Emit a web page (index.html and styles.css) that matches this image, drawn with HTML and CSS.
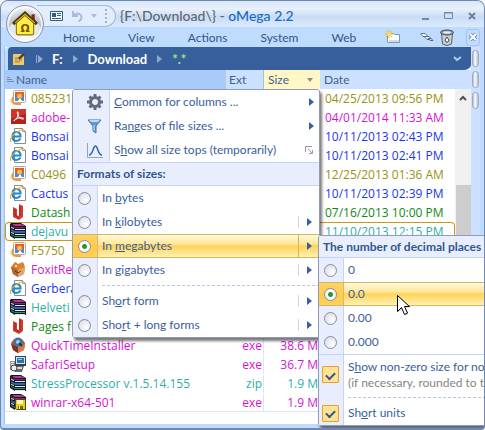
FILE: index.html
```html
<!DOCTYPE html>
<html lang="en">
<head>
<meta charset="utf-8">
<title>{F:\Download\} - oMega 2.2</title>
<link rel="stylesheet" href="styles.css">
</head>
<body>
<svg class="sprite" aria-hidden="true">
  <symbol id="photo" viewBox="0 0 16 16">
    <path d="M3 6C0 9 1 14 5 15h6v-2H6C3 12 3 9 5 7z" fill="#f59a35"/><path d="M1 9c-1 4 2 6 5 6" fill="none" stroke="#ffcf8a"/>
    <rect x="3.500" y=".5" width="12" height="12" rx="1" fill="#fff" stroke="#b5a9a5"/>
    <rect x="5" y="2" width="9" height="9" fill="#e9581c"/><path d="M5 11V6l3 1 1 4zM10 11l1-3 3-2v5z" fill="#3f8fe0"/><circle cx="9.500" cy="6" r="2.500" fill="#ffb84a"/><path d="M8 11l2-3 2 3z" fill="#fff"/>
  </symbol>
  <symbol id="adobe" viewBox="0 0 16 16">
    <rect x="1" y="0" width="15" height="15" fill="#b81f18"/><path d="M1 0h15v5L1 10z" fill="#d0342b"/>
    <path d="M4 12c3-2 5-6 4-9-1-1-1 1 0 3 1 3 3 4 5 4s0-2-4-1-5 2-5 3z" fill="none" stroke="#fff"/>
  </symbol>
  <symbol id="ie" viewBox="0 0 16 16">
    <path d="M4.500.5h8l3 3v12h-11z" fill="#fff" stroke="#8b8b96"/><path d="M12.500.5v3h3" fill="#ddd" stroke="#8b8b96"/>
    <path d="M2.500 8.500h8c0-3-1.500-4.500-4-4.500s-4 2-4 4.500S4 13 6.500 13s3-1 4-2.500" fill="none" stroke="#2089cf" stroke-width="2.200"/>
    <path d="M1 14c-2-3 2-9 10-12 2-.5 2 .5 1.500 2" fill="none" stroke="#e8b52e" stroke-width="1.200"/>
  </symbol>
  <symbol id="rar" viewBox="0 0 16 16">
    <path d="M0 1l1-1h10l5 3v13H5L0 13z" fill="#171717"/>
    <path d="M2 1h9l4 2H5z" fill="#b23aa0"/><path d="M1 2l4 2h10v1H5L1 3z" fill="#8a2478"/>
    <path d="M1 6l4 2h10v2H5L1 8z" fill="#3060c8"/><path d="M1 11l4 2h10v1H5l-4-2z" fill="#15a07a"/>
    <path d="M5 6h10v1H5zM5 11h10v1H5zM5 15h10v1H5z" fill="#e8e8e8"/><path d="M1 4l3 1v1L1 5zM1 9l3 1v1l-3-1z" fill="#eee"/>
  </symbol>
  <symbol id="redbook" viewBox="0 0 16 16">
    <path d="M3 3l4 2v6l2 1V0l4 2v11l-4 3-6-3z" fill="#d63a2e"/><path d="M5 5v6l4 3M10 2v10" fill="none" stroke="#a8221c"/><path d="M7 5v6l2 1V5z" fill="#fff"/>
  </symbol>
  <symbol id="fox" viewBox="0 0 16 16">
    <path d="M1 6l4-5 3 2 5-2 2 5-1 7-6 3-5-3z" fill="#c98445"/><path d="M1 6l7 3v7l-5-3z" fill="#a96731"/><path d="M8 9l7-3-1 7-6 3z" fill="#e0ac6e"/>
    <path d="M3 4l3-3 2 3 4-2 1 4-5 3z" fill="#ef7d24"/><circle cx="6" cy="5" r="1" fill="#fff"/><path d="M5 10l3 2 3-2" stroke="#643417" fill="none"/>
  </symbol>
  <symbol id="qt" viewBox="0 0 16 16">
    <path d="M1 6l3-4h8l3 4-1 7-6 3-5-3z" fill="#b75738"/><path d="M1 7l7 3v6l-5-3z" fill="#7e3425"/><path d="M8 10l7-3-1 6-6 3z" fill="#d37a50"/>
    <circle cx="8" cy="5" r="4.500" fill="#3c759f"/><circle cx="8" cy="5" r="2" fill="#9fd0e8"/><path d="M9 6l3 3" stroke="#173652" stroke-width="2"/>
  </symbol>
  <symbol id="setup" viewBox="0 0 16 16">
    <path d="M5 0h11v10H5z" fill="#3a3f45"/><path d="M6 1h9v7H6z" fill="#d9e5ec"/><path d="M7 2h7v5H7z" fill="#2476b8"/><path d="M8 3h4v1H8z" fill="#8bd3f4"/>
    <path d="M0 5h5v9H0z" fill="#999"/><path d="M1 6h3v1H1zM1 8h3v1H1z" fill="#eee"/><path d="M3 10h11l-2 6H5z" fill="#666b70"/><path d="M5 11h7v2H5z" fill="#ddd"/><circle cx="4" cy="12" r="3" fill="#eee" stroke="#444"/>
  </symbol>
  <symbol id="disk" viewBox="0 0 16 16">
    <use href="#rar"/><path d="M5.500 5.500h10v10h-9l-1-1z" fill="#e5cf1b" stroke="#554b08"/><path d="M7 6h6v4H7z" fill="#fff8b8"/><path d="M8 12h5v3H8z" fill="#756a17"/><path d="M9 12h1v3H9z" fill="#fff"/>
  </symbol>
  <symbol id="tri" viewBox="0 0 5 8"><path d="M0 0l5 4-5 4z" fill="currentColor"/></symbol>
</svg>

<div class="window">
  <header class="titlebar">
    <div class="quick">
      <button aria-label="Views"><svg width="14" height="10"><path d="M.5.5h12v9H.5z" fill="#f5faff" stroke="#35588e"/><path d="M2 2h4v4H2zM7 2h4v1H7zM7 4h4v1H7zM2 7h9v1H2z" fill="#35588e"/></svg></button>
      <button aria-label="Undo"><svg width="11" height="12"><path d="M1 1v5h5M1.500 5.500c4-4 8-1 8 2s-2 3-3 4" fill="none" stroke="#a9bcd9" stroke-width="2"/></svg></button>
      <button aria-label="More"><svg width="6" height="4"><path d="M0 0h6L3 4z" fill="#a9bcd9"/></svg></button>
      <span class="grip"></span>
    </div>
    <h1>{F:\Download\} - <span>oMega 2.2</span></h1>
    <div class="controls">
      <button aria-label="Minimize"><svg width="10" height="10"><path d="M2 7h7v2H2z" fill="#7288aa"/></svg></button>
      <button aria-label="Maximize"><svg width="10" height="8"><path d="M.5.5h8v6h-8zM0 1h9" fill="none" stroke="#7288aa"/></svg></button>
      <button aria-label="Close"><svg width="8" height="8"><path d="M1 1l6 6M7 1L1 7" stroke="#6b80a3" stroke-width="2"/></svg></button>
    </div>
  </header>
  <nav class="mainmenu">
    <div class="tabs"><a href="#">Home</a><a href="#">View</a><a href="#">Actions</a><a href="#">System</a><a href="#">Web</a></div>
    <div class="tools">
      <button aria-label="New folder"><svg width="18" height="14"><path d="M3.500 4.500l2-1h4l1 1h5v8h-12z" fill="#fff" stroke="#8292b0"/><path d="M5 10h10v2H5z" fill="#cfdcf2"/><path d="M5 0v8M1 4h8M2 1l6 6M8 1L2 7" stroke="#edb12b"/><circle cx="5" cy="4" r="2" fill="#ffe15a"/></svg></button>
      <button aria-label="Links"><svg width="14" height="9"><path d="M1 .5h4l2 2-1 1H3l-2-2zM5 3.500h4l2 2-1 1H7l-2-2zM8 5.500h3l2 2h-3z" fill="#fff" stroke="#566a8a"/></svg></button>
      <button aria-label="Recycle bin"><svg width="14" height="17"><path d="M1.500 4h11l-1 11q-4.500 3-9 0z" fill="#c9cfd5" stroke="#555f69"/><ellipse cx="7" cy="3.500" rx="6.500" ry="2.500" fill="#8b96a0" stroke="#444e58"/><ellipse cx="7" cy="3.500" rx="4" ry="1.200" fill="#e6ebef"/><path d="M5 11l2-3 2 3-1 2H6z" fill="#fff" stroke="#3c464f"/></svg></button>
      <button class="tabclose" aria-label="Close tab"><svg width="8" height="8"><path d="M1 1l6 6M7 1L1 7" stroke="#7590b8" stroke-width="4"/><path d="M1 1l6 6M7 1L1 7" stroke="#fff" stroke-width="2"/></svg></button>
    </div>
  </nav>
  <button class="orb" aria-label="Home"><svg viewBox="0 0 24 24"><path d="M18 3h3v8h-3z" fill="#7f2d1d"/><path d="M4 11v9q0 2 2 2h12q2 0 2-2v-9l-8-7z" fill="#ffed4a" stroke="#886d00"/><path d="M1 12L12 2l11 10" fill="none" stroke="#4d3900" stroke-width="3"/><path d="M3 11l9-8 9 8" fill="none" stroke="#e8bd22"/><text x="12" y="19" text-anchor="middle">Ω</text></svg></button>

  <div class="workspace">
    <main class="main">
      <div class="path">
        <svg class="edit" width="12" height="12"><rect width="11" height="12" y="1" rx="1" fill="#f1ca68"/><path d="M2 5h7M2 7h7M2 9h5" stroke="#a07b2d"/><path d="M4 8l1-3 5-5 2 2-6 5z" fill="#4b4236"/><path d="M4 8l1-3 1 2z" fill="#fff"/></svg>
        <svg class="start" width="8" height="8"><path d="M0 0h1v8H0zM2 0l5 4-5 4z" fill="#91a9d0"/></svg>
        <a href="#">F:</a><svg class="arrow"><use href="#tri"/></svg><a href="#">Download</a><svg class="arrow"><use href="#tri"/></svg><a class="mask" href="#">*.*</a>
        <svg class="chevron" width="9" height="6"><path d="M1 1l3 3 4-3" fill="none" stroke="#b8cbed" stroke-width="2"/></svg>
      </div>
      <div class="files">
        <table>
          <colgroup><col><col class="c-ext"><col class="c-size"><col class="c-date"></colgroup>
          <thead><tr><th class="h-name"><div><svg width="9" height="8"><path d="M1 1.500h3M1 3.500h5M1 5.500h7" stroke="#7a8aa5"/></svg>Name</div></th><th class="h-ext">Ext</th><th class="h-size"><div>Size<svg width="6" height="4"><path d="M0 0h6L3 4z" fill="#8b8d92"/></svg></div></th><th>Date</th></tr></thead>
          <tbody>
            <tr class="olive"><td><svg><use href="#photo"/></svg>085231</td><td></td><td></td><td>04/25/2013 09:56 PM</td></tr>
            <tr class="magenta"><td><svg><use href="#adobe"/></svg>adobe-</td><td></td><td></td><td>04/01/2014 11:33 AM</td></tr>
            <tr class="blue"><td><svg><use href="#ie"/></svg>Bonsai</td><td></td><td></td><td>10/11/2013 02:43 PM</td></tr>
            <tr class="blue"><td><svg><use href="#ie"/></svg>Bonsai</td><td></td><td></td><td>10/11/2013 02:41 PM</td></tr>
            <tr class="olive"><td><svg><use href="#photo"/></svg>C0496</td><td></td><td></td><td>12/25/2013 01:36 AM</td></tr>
            <tr class="blue"><td><svg><use href="#ie"/></svg>Cactus</td><td></td><td></td><td>10/11/2013 02:39 PM</td></tr>
            <tr class="green"><td><svg><use href="#redbook"/></svg>Datash</td><td></td><td></td><td>07/16/2013 10:00 PM</td></tr>
            <tr class="teal current"><td><svg><use href="#rar"/></svg>dejavu</td><td></td><td></td><td>11/10/2013 12:15 PM</td></tr>
            <tr class="olive"><td><svg><use href="#photo"/></svg>F5750</td><td></td><td></td><td></td></tr>
            <tr class="magenta"><td><svg><use href="#fox"/></svg>FoxitRe</td><td></td><td></td><td></td></tr>
            <tr class="blue"><td><svg><use href="#ie"/></svg>Gerbera</td><td></td><td></td><td></td></tr>
            <tr class="teal"><td><svg><use href="#rar"/></svg>Helveti</td><td></td><td></td><td></td></tr>
            <tr class="green"><td><svg><use href="#redbook"/></svg>Pages f</td><td></td><td></td><td></td></tr>
            <tr class="magenta"><td><svg><use href="#qt"/></svg>QuickTimeInstaller</td><td>exe</td><td>38.6 M</td><td></td></tr>
            <tr class="magenta"><td><svg><use href="#setup"/></svg>SafariSetup</td><td>exe</td><td>36.7 M</td><td></td></tr>
            <tr class="teal"><td><svg><use href="#rar"/></svg>StressProcessor v.1.5.14.155</td><td>zip</td><td>1.9 M</td><td></td></tr>
            <tr class="magenta"><td><svg><use href="#disk"/></svg>winrar-x64-501</td><td>exe</td><td>1.9 M</td><td></td></tr>
          </tbody>
        </table>
        <div class="scroll"><svg width="8" height="6"><path d="M1 5l3-3 3 3" fill="none" stroke="#505050" stroke-width="2"/></svg><span></span></div>
      </div>
    </main>
    <aside class="knobs"><span></span><span></span><span></span></aside>
  </div>

  <div class="menu sizes">
    <ul class="commands">
      <li><svg class="cmd" viewBox="0 0 16 16"><circle cx="8" cy="8" r="4.500" fill="none" stroke="#666979" stroke-width="3"/><path d="M8 0v3M8 13v3M0 8h3M13 8h3M2.500 2.500l2 2M11.500 11.500l2 2M13.500 2.500l-2 2M2.500 13.500l2-2" stroke="#666979" stroke-width="3"/></svg><button><span><u>C</u>ommon for columns ...</span></button><svg class="sub"><use href="#tri"/></svg></li>
      <li><svg class="cmd" viewBox="0 0 16 16"><path d="M1 2h13L9 8v7l-3-2V8z" fill="#6799cb" stroke="#47719f"/><path d="M2 2h11l-2 2H4z" fill="#b9daf5"/><path d="M7 7v6" stroke="#c9e3f8"/></svg><button><span>Ra<u>n</u>ges of file sizes ...</span></button><svg class="sub"><use href="#tri"/></svg></li>
      <li><svg class="cmd" viewBox="0 0 16 16"><path d="M.5 1v14.500H16" fill="none" stroke="#8fa4c8"/><path d="M2 13c4 0 4-9 6.500-9s2 9 6.500 9" fill="none" stroke="#2c66b0" stroke-width="1.500"/></svg><button><span>S<u>h</u>ow all size tops (temporarily)</span></button><svg class="launch" width="8" height="8"><path d="M.5 6V.5H7M3 3l4 4M7.500 4v3.500H4" fill="none" stroke="#9b96b2"/></svg></li>
    </ul>
    <h2>Formats of sizes:</h2>
    <ul class="options">
      <li><input type="radio" name="fmt" id="f1"><label for="f1">In <u>b</u>ytes</label></li>
      <li><input type="radio" name="fmt" id="f2"><label for="f2">In <u>k</u>ilobytes</label><i><svg><use href="#tri"/></svg></i></li>
      <li class="hot"><input type="radio" name="fmt" id="f3" checked><label for="f3">In <u>m</u>egabytes</label><i><svg><use href="#tri"/></svg></i></li>
      <li><input type="radio" name="fmt" id="f4"><label for="f4">In <u>g</u>igabytes</label><i><svg><use href="#tri"/></svg></i></li>
      <li class="dash"></li>
      <li><input type="radio" name="fmt" id="f5"><label for="f5">Sh<u>o</u>rt form</label><i><svg><use href="#tri"/></svg></i></li>
      <li><input type="radio" name="fmt" id="f6"><label for="f6">Sho<u>r</u>t + long forms</label><i><svg><use href="#tri"/></svg></i></li>
    </ul>
  </div>

  <div class="menu decimals">
    <h2>The number of decimal places</h2>
    <ul class="options">
      <li><input type="radio" name="dec" id="d0"><label for="d0">0</label></li>
      <li class="hot"><input type="radio" name="dec" id="d1" checked><label for="d1">0.0</label></li>
      <li><input type="radio" name="dec" id="d2"><label for="d2">0.00</label></li>
      <li><input type="radio" name="dec" id="d3"><label for="d3">0.000</label></li>
    </ul>
    <ul class="options checks">
      <li class="tall"><input type="checkbox" id="k1" checked><label for="k1">S<u>h</u>ow non-zero size for no<br><small>(if necessary, rounded to t</small></label></li>
      <li class="dash"></li>
      <li><input type="checkbox" id="k2" checked><label for="k2">Sh<u>o</u>rt units</label></li>
    </ul>
  </div>
  <svg class="cursor" width="15" height="22" viewBox="0 0 15 22"><path d="M1.500 1.500v16l4-4 3 7 3-1.500-3-6.500h5z" fill="#0003"/><path d="M.5.5v16l4-4 3 7 3-1.500-3-6.500h5z" fill="#fff" stroke="#000"/></svg>
</div>
</body>
</html>
```

FILE: styles.css
```css
* { box-sizing: border-box; }
body { margin: 0; font: 12px/16px Lato, "Open Sans", sans-serif; color: #39609b; background: #fff; overflow: hidden; }
.sprite { position: absolute; width: 0; height: 0; }
button { padding: 0; border: 0; background: none; font: inherit; color: inherit; display: flex; align-items: center; justify-content: center; }
a { color: inherit; text-decoration: none; }
ul { list-style: none; margin: 0; padding: 0; }

.window { position: relative; display: flex; flex-direction: column; min-height: 100vh; overflow: hidden; padding: 0 4px 4px 4px; border: 1px solid #7088ae; border-width: 1px 1px 2px 1px; border-radius: 8px 8px 4px 4px; background: #bfdbff; }

.titlebar { display: flex; align-items: center; height: 26px; margin: 0 -4px; padding: 4px 8px 0 36px; background: linear-gradient(#d7e6f9, #e8f1fc 30%, #c9dcf5 60%, #dbebff); }
.quick { display: flex; align-items: center; gap: 8px; height: 22px; padding: 0 8px 0 13px; border: 1px solid #9db9df; border-left: 0; border-radius: 0 12px 12px 0; background: #e3eefc; }
.grip { height: 14px; border-left: 2px dotted #9db4d8; }
h1 { flex: 1; margin: 0 0 0 4px; font: 500 14px/22px Lato, sans-serif; color: #62666e; white-space: pre; }
h1 span { color: #156bc9; }
.controls { display: flex; gap: 14px; }

.mainmenu { display: flex; height: 20px; align-items: center; padding-left: 58px; }
.tabs { display: flex; gap: 33px; flex: 1; padding-top: 2px; color: #35557f; }
.tools { display: flex; align-items: center; gap: 6px; }
.tools button:first-child { margin-right: 12px; }
.tabclose { width: 14px; height: 17px; margin-left: 6px; border: 1px solid #a3c5f3; border-radius: 3px; }
.orb { position: absolute; left: 5px; top: 4px; width: 38px; height: 38px; border: 1px solid #8b97ac; border-radius: 50%; background: radial-gradient(circle at 50% 80%, #fff, #dce1ea 50%, #b4bccb 52%, #f5f7fa 80%); box-shadow: inset 0 0 0 2px #ffffffaa; }
.orb svg { width: 26px; height: 26px; }
.orb text { font: bold 10px "DejaVu Sans", sans-serif; fill: #765a00; }

.workspace { display: flex; flex: 1; }
.main { flex: 1; display: flex; flex-direction: column; background: #fff; border-left: 1px solid #9fc0ec; margin-left: -1px; }
.path { display: flex; align-items: center; height: 23px; padding: 0 10px 0 5px; margin: 0 -1px 0 3px; background: #375f9b; border-radius: 4px 0 8px 0; box-shadow: -3px 0 #bfdbff; color: #fff; font-weight: 700; font-size: 13px; }
.start { margin: 0 8px 0 11px; }
.arrow { width: 5px; height: 8px; margin: 0 10px; color: #91a9d0; }
.mask { color: #97ee72; }
.chevron { margin-left: auto; }

.files { display: flex; flex: 1; background: linear-gradient(#cbe1ff, #cbe1ff) 0 0 / 100% 19px no-repeat; }
table { flex: 1; align-self: flex-start; border-collapse: separate; border-spacing: 0; table-layout: fixed; font: 400 12px/17px "Open Sans", sans-serif; }
.c-ext { width: 38px; }
.c-size { width: 56px; }
.c-date { width: 135px; }
th { height: 19px; padding: 0 0 0 4px; text-align: left; font: 12px/18px Lato, sans-serif; color: #42628d; }
.h-name { padding-left: 1px; background: #a8cbfa; }
th div { display: flex; align-items: center; }
.h-name svg { margin-right: 1px; }
.h-ext { padding-left: 3px; border-right: 1px solid #a3bfe2; }
.h-size { background: #fff7c6; }
.h-size div { justify-content: space-between; padding-right: 7px; }
td { height: 19px; padding: 0; white-space: nowrap; border: 1px solid transparent; border-width: 1px 0; }
td:first-child { padding-left: 5px; }
td svg { width: 16px; height: 16px; margin-right: 5px; vertical-align: top; }
td:nth-child(2) { text-align: right; padding-right: 1px; border-right: 1px solid #d9e6f6; }
td:nth-child(3) { text-align: right; padding-right: 2px; }
td:nth-child(4) { padding-left: 5px; }
tbody tr:last-child td { border-bottom-color: #d9e6f6; }
.current td { border-color: #c99a14; }
.current td:first-child { border-left: 1px solid #c99a14; border-radius: 4px 0 0 4px; padding-left: 4px; }
.current td:last-child { border-right: 1px solid #c99a14; border-radius: 0 4px 4px 0; }
.olive { color: #949410; }
.magenta { color: #d414d4; }
.blue { color: #1a36e8; }
.green { color: #128a12; }
.teal { color: #2cb0ac; }
.scroll { width: 16px; margin-top: 19px; padding-top: 6px; background: #f0f0f0; display: flex; flex-direction: column; align-items: center; }
.scroll span { width: 15px; height: 160px; margin-top: 84px; background: #cdcdcd; }
.knobs { display: flex; flex-direction: column; gap: 4px; width: 9px; padding: 3px 1px; background: #cbe1ff; }
.knobs span { width: 7px; height: 17px; border: 1px solid #9aa9bb; border-radius: 4px; background: linear-gradient(90deg, #aebac8, #fff 40%, #b4bec9); }

.menu { position: absolute; border: 1px solid #8f9dbb; border-radius: 3px; background: #fff; box-shadow: 2px 3px 3px #0008; }
.sizes { left: 71px; top: 88px; width: 248px; }
.decimals { left: 317px; top: 234px; width: 186px; }
.menu li { position: relative; display: flex; align-items: center; height: 24px; }
.commands { background: linear-gradient(90deg, #e8eefe 36px, #c5d3fa 36px, #c5d3fa 37px, #fff 37px); border-radius: 3px; }
.commands li { padding-right: 5px; }
.cmd { width: 16px; height: 16px; margin: 0 11px 0 14px; }
.cmd + button { margin-right: auto; }
.sub { width: 5px; height: 8px; }
.launch { margin-right: 1px; }
h2 { margin: 0; padding: 0 4px; font: 700 12px/22px Lato, sans-serif; background: #e8eefe; white-space: nowrap; color: #2f568f; }
.sizes h2 { border: 1px solid #c5d3fa; border-width: 1px 0; }
.decimals h2 { line-height: 21px; }
.options { background: linear-gradient(90deg, #e8eefe 24px, #c5d3fa 24px, #c5d3fa 25px, #fff 25px); }
.options label { flex: 1; margin-left: 11px; white-space: nowrap; }
input { appearance: none; flex: none; margin: 0 0 0 5px; width: 13px; height: 13px; border: 1px solid #858ca3; border-radius: 50%; background: radial-gradient(circle at 70% 70%, #fff, #d7d7e1); }
input[type=radio]:checked { background: radial-gradient(circle, #26992c 2px, #fff 3px, #eee); }
.options i { width: 21px; height: 12px; padding: 2px 8px; border-left: 1px solid #d5d5dd; display: flex; }
.options i svg { flex: none; width: 5px; height: 8px; }
.menu .hot { background: linear-gradient(90deg, #ffc844cc 24px, #d7ba6a 24px, #d7ba6a 25px, transparent 25px), linear-gradient(#fff9d9, #ffe79b 40%, #ffd35a 50%, #ffe58e 80%, #fff0b6); border: 1px solid #d1b760; border-width: 1px 0; }
.hot i { height: 22px; padding-top: 7px; border-color: #d1b760; }
.menu .dash { height: 7px; }
.dash::after { content: ""; height: 1px; flex: 1; margin-left: 29px; background: repeating-linear-gradient(90deg, #b5c8df 0, #b5c8df 3px, transparent 3px, transparent 5px); }
.decimals .options { border-top: 1px solid #c5d3fa; }
.checks input { width: 17px; height: 17px; margin-left: 3px; border: 1px solid #ef9b33; border-radius: 1px; background: #ffe394; display: grid; place-items: center; }
.checks input::after { content: ""; width: 7px; height: 4px; border: solid #32548a; border-width: 0 0 2px 2px; transform: rotate(-45deg); }
.checks label { margin-left: 9px; }
.menu .tall { height: 39px; }
small { font-size: 12px; color: #858585; }
.cursor { position: absolute; left: 396px; top: 294px; }
```
